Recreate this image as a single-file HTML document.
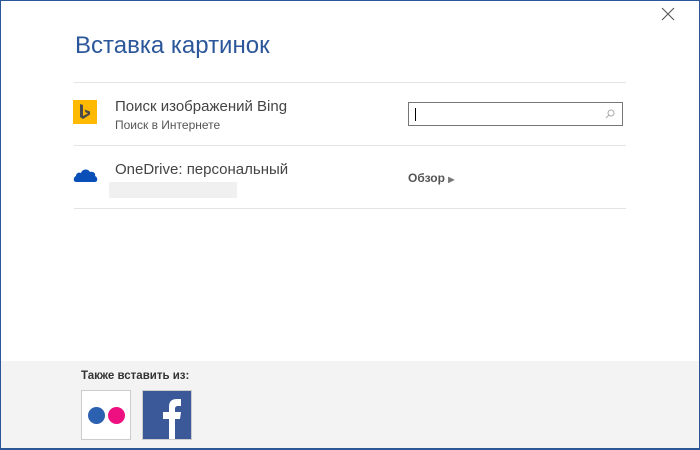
<!DOCTYPE html>
<html><head><meta charset="utf-8"><style>
*{margin:0;padding:0;box-sizing:border-box}
body{width:700px;height:450px;background:#fff;font-family:"Segoe UI","Liberation Sans",sans-serif;position:relative;overflow:hidden}
.frame{position:absolute;left:0;top:0;width:700px;height:450px;border:1px solid #2b5797;border-bottom-width:2px}
.abs{position:absolute}
.title{left:75px;top:32px;font-size:24px;color:#2b579a;font-weight:normal}
.line{left:74px;width:552px;height:1px;background:#e4e4e4}
.t1{font-size:15px;color:#444}
.t2{font-size:12px;color:#555}
.footer{left:1px;top:361px;width:698px;height:87px;background:#f3f3f3}
</style></head><body>
<div class="abs title">Вставка картинок</div>
<div class="abs" style="right:25px;top:5px;font-size:18px;color:#555">
<svg width="14" height="14" viewBox="0 0 14 14"><path d="M1 1L13 13M13 1L1 13" stroke="#555" stroke-width="1.1"/></svg></div>
<div class="abs line" style="top:82px"></div>
<div class="abs line" style="top:145px"></div>
<div class="abs line" style="top:208px"></div>

<div class="abs" style="left:73px;top:100px;width:24px;height:24px;background:#ffb900">
<svg width="24" height="24" viewBox="0 0 24 24"><path d="M7 4L10 5V16L15 13.5L12.5 12.3L11.5 9.5L17 11.5V14.5L10 19L7 17Z" fill="#4a4a4a"/></svg></div>
<div class="abs t1" style="left:115px;top:98px">Поиск изображений Bing</div>
<div class="abs t2" style="left:115px;top:118px">Поиск в Интернете</div>
<div class="abs" style="left:408px;top:102px;width:215px;height:24px;border:1px solid #767676;background:#fff">
<div class="abs" style="left:6px;top:5px;width:1px;height:13px;background:#000"></div>
<svg class="abs" style="right:7px;top:6px" width="10" height="10" viewBox="0 0 10 10"><circle cx="6" cy="4" r="3" fill="none" stroke="#aaa"/><path d="M4 6L1 9" stroke="#aaa"/></svg>
</div>

<svg class="abs" style="left:73px;top:167px" width="25" height="16" viewBox="0 0 25 16"><path d="M3 15C0 15 0 10 3 9C3 6 6 5 8 6C9 2 15 1 17 5C20 4 23 6 22 9C25 10 25 15 22 15Z" fill="#0a4fb8"/></svg>
<div class="abs t1" style="left:115px;top:161px">OneDrive: персональный</div>
<div class="abs" style="left:109px;top:182px;width:128px;height:16px;background:#f0f0f0"></div>
<div class="abs" style="left:408px;top:171px;font-size:12px;color:#555;font-weight:bold">Обзор <span style="font-size:8px;color:#777">▶</span></div>

<div class="abs footer"></div>
<div class="abs" style="left:81px;top:370px;font-size:11.5px;color:#333;font-weight:bold">Также вставить из:</div>
<div class="abs" style="left:81px;top:390px;width:50px;height:50px;background:#fff;border:1px solid #ccc">
<div class="abs" style="left:6px;top:16px;width:17px;height:17px;border-radius:50%;background:#2c60b0"></div>
<div class="abs" style="left:26px;top:16px;width:17px;height:17px;border-radius:50%;background:#ee1080"></div>
</div>
<div class="abs" style="left:142px;top:390px;width:50px;height:50px;background:#3b5998;border:1px solid #ccc;overflow:hidden">
<svg width="48" height="48" viewBox="0 0 48 48"><path d="M26 48V28H20V21H26V16C26 10 29 8 34 8H38V15H35C33 15 32 16 32 18V21H38L37 28H32V48Z" fill="#fff"/></svg>
</div>
<div class="frame"></div>
</body></html>
